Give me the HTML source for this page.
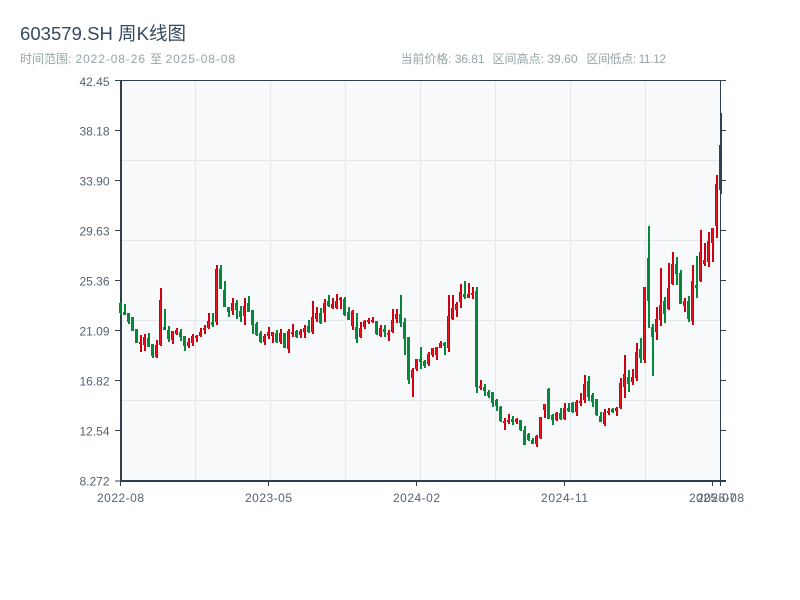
<!DOCTYPE html>
<html><head><meta charset="utf-8"><style>
html,body{margin:0;padding:0;background:#fff;width:800px;height:600px;overflow:hidden}
svg{display:block}
text{font-family:"Liberation Sans","Noto Sans CJK SC",sans-serif}
.y{font-size:12px;fill:#556270;text-anchor:end}
.x{font-size:12px;fill:#556270;text-anchor:middle}
.s{font-size:12px;fill:#95a5a6}
</style></head><body>
<svg width="800" height="600" viewBox="0 0 800 600" xmlns="http://www.w3.org/2000/svg">
<text x="20" y="40" font-size="18.5" fill="#34495e" textLength="166">603579.SH 周K线图</text>
<text class="s" x="20" y="63">时间范围:</text>
<text class="s" x="75.5" y="63" textLength="69.5">2022-08-26</text>
<text class="s" x="150" y="63">至</text>
<text class="s" x="165.5" y="63" textLength="69.5">2025-08-08</text>
<text class="s" x="400.5" y="63" textLength="84">当前价格: 36.81</text>
<text class="s" x="492.5" y="63" textLength="85">区间高点: 39.60</text>
<text class="s" x="586.5" y="63" textLength="79.5">区间低点: 11.12</text>

<rect x="120" y="80" width="600" height="400" fill="#f8f9fb"/>
<path d="M120 160.5H720M120 240.5H720M120 320.5H720M120 400.5H720M195.5 80V480M270.5 80V480M345.5 80V480M420.5 80V480M495.5 80V480M570.5 80V480M645.5 80V480" stroke="#e4e7ec" stroke-width="1" fill="none"/>

<path d="M115 80.5H726M115 130.5H120M115 180.5H120M115 230.5H120M115 280.5H120M115 330.5H120M115 380.5H120M115 430.5H120M115 481H120" stroke="#2c3e50" stroke-width="1" fill="none"/>
<path d="M121 80V482" stroke="#2c3e50" stroke-width="2" fill="none"/>
<path d="M120 481H726" stroke="#2c3e50" stroke-width="2" fill="none"/>
<path d="M720 130.5H726M720 180.5H726M720 230.5H726M720 280.5H726M720 330.5H726M720 380.5H726M720 430.5H726M120.5 482V486M268.5 482V486M416.5 482V486M564.5 482V486M712.5 482V486M720.5 482V486" stroke="#2c3e50" stroke-width="1" fill="none"/>

<g fill="none" stroke="#07873a" stroke-width="2">
<path d="M121 302V315M125 304V315M129 313V324M133 317V331M137 329V343M149 333V347M153 344V358M165 309V330M169 326V342M181 329V341M185 336V351M213 313V327M221 265V289M225 281V307M229 307V317M237 300V319M241 306V322M249 296V312M253 310V334M257 322V336M261 331V343M277 330V343M285 333V348M297 330V338M309 320V333M321 308V324M329 295V307M345 297V316M349 307V320M357 313V343M377 321V335M385 325V337M401 295V327M405 318V355M409 337V384M421 347V369M425 360V368M445 342V355M465 281V299M477 287V393M485 384V396M489 390V398M493 392V407M497 399V411M501 406V422M513 416V425M521 420V431M525 426V445M529 433V441M533 438V444M549 388V419M553 414V425M561 408V420M569 403V412M573 402V413M589 376V401M593 393V407M597 399V416M601 412V422M613 408V413M629 370V392M641 338V363M649 226V328M653 324V376M665 297V323M677 257V285M681 270V304M689 296V322M697 256V298"/>
<path stroke-width="3" d="M120.5 303V313M124.5 312V315M128.5 313V322M132.5 317V331M136.5 329V343M148.5 338V347M152.5 344V356M164.5 327V330M168.5 330V339M180.5 332V337M184.5 336V346M212.5 322V325M220.5 269V289M224.5 290V307M228.5 307V312M236.5 303V310M240.5 311V317M248.5 303V312M252.5 310V325M256.5 324V335M260.5 333V342M276.5 333V342M284.5 333V348M296.5 331V337M308.5 326V332M320.5 313V323M328.5 301V306M344.5 299V315M348.5 312V320M356.5 327V339M376.5 321V334M384.5 329V332M400.5 314V323M404.5 322V339M408.5 337V380M420.5 359V362M424.5 361V366M444.5 343V346M464.5 294V297M476.5 291V387M484.5 387V391M488.5 392V396M492.5 392V403M496.5 400V406M500.5 407V421M512.5 419V422M520.5 420V430M524.5 430V445M528.5 434V440M532.5 440V444M548.5 389V419M552.5 415V420M560.5 413V419M568.5 408V411M572.5 403V412M588.5 381V397M592.5 395V402M596.5 399V415M600.5 416V422M612.5 409V412M628.5 377V384M640.5 349V358M648.5 258V301M652.5 327V337M664.5 301V314M676.5 264V274M680.5 273V304M688.5 301V319M696.5 285V288"/>
</g>
<g fill="none">
<path stroke="#cc0210" stroke-width="2" d="M141 335V352M145 334V351M157 340V358M161 288V346M173 331V344M177 328V335M189 338V348M193 334V346M197 335V342M201 328V337M205 325V334M209 313V329M217 265V325M233 298V315M245 298V325M265 334V345M269 327V339M273 332V343M281 329V344M289 329V353M293 324V337M301 329V338M305 325V338M313 301V334M317 307V322M325 299V322M333 298V309M337 294V309M341 297V309M353 310V330M361 322V338M365 320V329M369 318V324M373 317V323M381 325V337M389 330V341M393 309V333M397 309V323M413 368V397M417 359V371M429 352V366M433 348V357M437 347V360M441 341V348M449 295V352M453 295V320M457 302V317M461 284V308M469 283V298M473 287V299M481 380V390M505 418V430M509 414V424M517 418V424M537 435V447M541 417V439M545 404V418M557 412V421M565 403V420M577 400V416M581 393V406M585 375V403M605 409V426M609 408V415M617 407V416M621 378V409M625 355V398M633 369V385M637 343V381M645 287V363M657 307V340M661 268V326M669 263V310M673 252V285M685 298V312M693 265V325M701 230V282M705 243V266M709 232V267M713 228V262M717 175V238M721 113V194"/>
<defs><path id="rb" d="M140.5 342V344M144.5 337V345M156.5 345V357M160.5 300V345M172.5 331V340M176.5 330V334M188.5 342V346M192.5 336V343M196.5 336V338M200.5 332V336M204.5 328V330M208.5 321V328M216.5 269V322M232.5 303V311M244.5 306V316M264.5 336V342M268.5 332V336M272.5 332V336M280.5 333V342M288.5 331V349M292.5 332V334M300.5 331V335M304.5 328V332M312.5 317V332M316.5 313V319M324.5 303V313M332.5 304V308M336.5 301V308M340.5 298V300M352.5 311V326M360.5 328V337M364.5 321V327M368.5 320V322M372.5 320V322M380.5 328V336M388.5 333V335M392.5 320V332M396.5 314V319M412.5 370V378M416.5 359V369M428.5 354V364M432.5 348V355M436.5 347V355M440.5 343V348M448.5 316V348M452.5 308V319M456.5 304V310M460.5 292V302M468.5 294V298M472.5 293V295M480.5 386V388M504.5 421V423M508.5 420V422M516.5 419V422M536.5 436V444M540.5 417V438M544.5 404V410M556.5 413V420M564.5 408V419M576.5 402V412M580.5 401V403M584.5 384V400M604.5 412V424M608.5 411V413M616.5 408V411M620.5 383V408M624.5 374V387M632.5 377V382M636.5 352V378M644.5 287V360M656.5 319V332M660.5 305V320M668.5 288V309M672.5 264V284M684.5 301V306M692.5 281V321M700.5 252V281M704.5 260V264M708.5 241V262M712.5 228V243M716.5 184V226M720.5 145V190"/></defs>
<use href="#rb" stroke="#cc0210" stroke-width="3"/>
<use href="#rb" stroke="#e8141e" stroke-width="1"/>
</g>
<path d="M720.5 80V481" stroke="#2c3e50" stroke-width="1" fill="none"/>

<text class="y" x="109.5" y="86">42.45</text>
<text class="y" x="109.5" y="135.5">38.18</text>
<text class="y" x="109.5" y="185.5">33.90</text>
<text class="y" x="109.5" y="235.5">29.63</text>
<text class="y" x="109.5" y="285.5">25.36</text>
<text class="y" x="109.5" y="335.5">21.09</text>
<text class="y" x="109.5" y="385.5">16.82</text>
<text class="y" x="109.5" y="435.5">12.54</text>
<text class="y" x="109.5" y="485.5">8.272</text>

<text class="x" x="120.5" y="502" textLength="47">2022-08</text>
<text class="x" x="268.5" y="502" textLength="47">2023-05</text>
<text class="x" x="416.5" y="502" textLength="47">2024-02</text>
<text class="x" x="564.5" y="502" textLength="47">2024-11</text>
<text class="x" x="712.5" y="502" textLength="47">2025-07</text>
<text class="x" x="720.5" y="502" textLength="47">2025-08</text>
</svg>
</body></html>
